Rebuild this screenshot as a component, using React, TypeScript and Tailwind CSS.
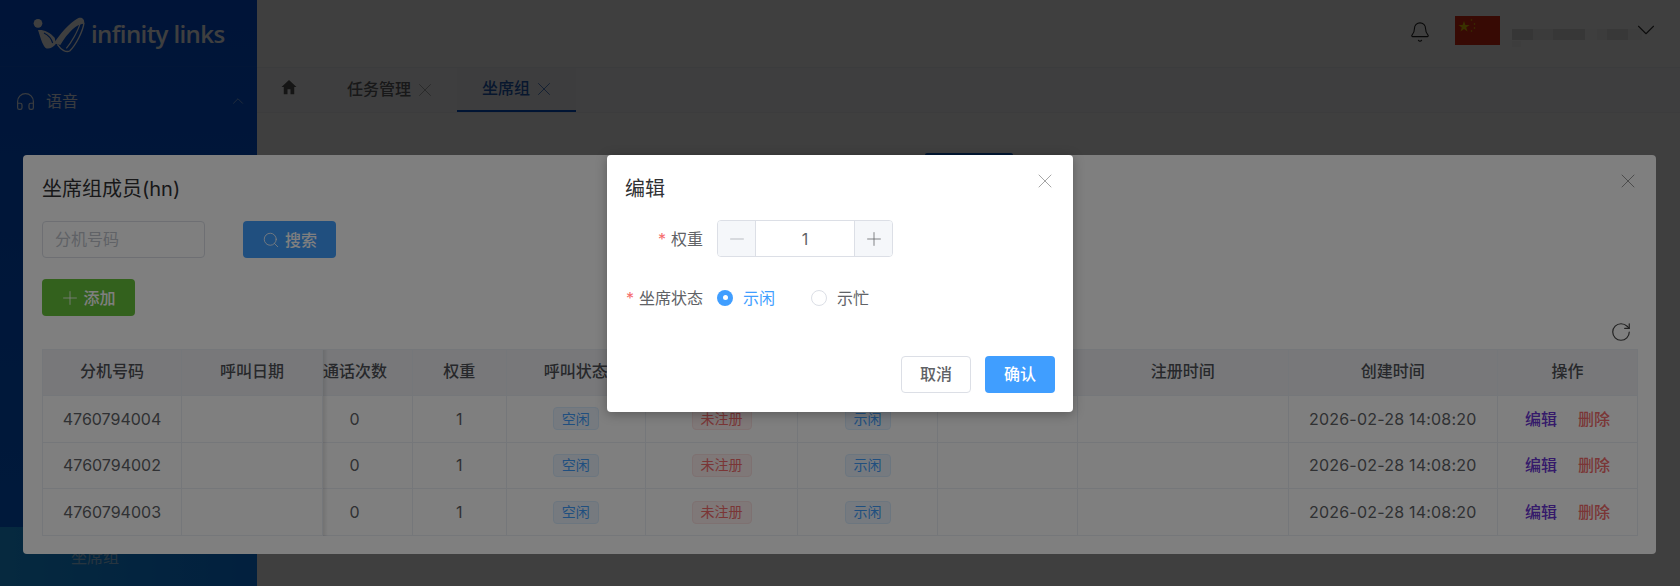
import React from "react";
import { Bell, ChevronDown, ChevronUp, Headphones, Minus, Plus, RotateCw, Search, X } from "lucide-react";

const rows = ["4760794004", "4760794002", "4760794003"];
const cols = "grid-cols-[139px_141px_90px_93.5px_139.5px_152px_140px_140px_210.5px_209.5px_140px]";
const headers = ["分机号码", "呼叫日期", "通话次数", "权重", "呼叫状态", "注册状态", "坐席状态", "", "注册时间", "创建时间", "操作"];

function Cell({ children, className = "" }: { children?: React.ReactNode; className?: string }) {
  return (
    <div className={`flex items-center justify-center border-b border-r border-[#ebeef5] whitespace-nowrap ${className}`}>
      {children}
    </div>
  );
}

function Tag({ kind, children }: { kind: "blue" | "red"; children: React.ReactNode }) {
  const tone =
    kind === "blue"
      ? "bg-[#ecf5ff] border-[#d9ecff] text-[#409eff]"
      : "bg-[#fef0f0] border-[#fde2e2] text-[#f56c6c]";
  return <span className={`flex h-[23px] items-center rounded border px-[8px] text-sm ${tone}`}>{children}</span>;
}

function Logo() {
  return (
    <div className="flex items-center">
      <svg width="64" height="44" viewBox="0 0 192 132" className="ml-[28px] text-white" fill="none">
        <circle cx="30" cy="37" r="13" fill="currentColor" />
        <path d="M30 57 C45 55 65 62 80 80 L84 98 C75 110 60 117 52 110 C42 100 36 75 30 57 Z" fill="currentColor" />
        <path d="M78 97 C95 70 125 35 150 22 C162 17 171 25 168 38 C150 36 120 62 97 102 Z" fill="currentColor" />
        <path d="M168 35 C165 60 145 100 125 120 C115 125 100 118 88 100" stroke="currentColor" strokeWidth="4" />
        <path d="M156 38 C150 60 130 95 115 112" stroke="currentColor" strokeWidth="3.5" />
        <path d="M48 66 C60 72 70 82 74 96" stroke="#0052e0" strokeWidth="3.5" />
      </svg>
      <span className="-ml-[1px] translate-y-[1px] font-['Open_Sans'] text-[24px] font-semibold tracking-[-0.6px] text-white">
        infinity links
      </span>
    </div>
  );
}

function Flag() {
  return (
    <svg width="45" height="29" viewBox="0 0 45 29" className="absolute left-[1455px] top-[16px]">
      <rect width="45" height="29" fill="#de2910" />
      <polygon points="9,5 10.4,9 14.6,9 11.2,11.5 12.5,15.5 9,13 5.5,15.5 6.8,11.5 3.4,9 7.6,9" fill="#e8c800" />
      <circle cx="16.5" cy="4" r="0.8" fill="#e8c800" />
      <circle cx="19.5" cy="8" r="0.8" fill="#e8c800" />
      <circle cx="19.5" cy="12" r="0.8" fill="#e8c800" />
      <circle cx="16.5" cy="15" r="0.8" fill="#e8c800" />
    </svg>
  );
}

function Mosaic() {
  return (
    <div className="absolute left-[1512px] top-[29px]">
      <div className="flex h-[11px] blur-[0.6px]">
        <span className="w-[21px] bg-[#d8d8d8]" />
        <span className="w-[20px] bg-[#ececec]" />
        <span className="w-[32px] bg-[#dedede]" />
        <span className="w-[12px] bg-[#fafafa]" />
        <span className="w-[10px] bg-[#f0f0f0]" />
        <span className="w-[21px] bg-[#e0e0e0]" />
        <span className="w-[14px] bg-[#f6f6f6]" />
      </div>
      <div className="mt-[1px] h-[6px] w-[9px] bg-[#f5f5f5]" />
    </div>
  );
}

export default function App() {
  return (
    <div className="relative flex h-[586px] w-[1680px] overflow-hidden bg-[#fff] font-['Inter','Noto_Sans_CJK_SC',sans-serif] text-base text-[#606266]">
      <aside className="flex w-[257px] shrink-0 flex-col bg-gradient-to-b from-[#0052e2] to-[#0068ee] text-white/90">
        <div className="flex h-[67px] items-center border-b border-[#0a5ae0]">
          <Logo />
        </div>
        <div className="mt-[17px] flex h-[34px] items-center pl-[15px] pr-[10px]">
          <Headphones size={21} strokeWidth={1.4} />
          <span className="ml-[10px]">语音</span>
          <ChevronUp size={18} strokeWidth={1.1} className="ml-auto opacity-70" />
        </div>
        <div className="mt-auto flex h-[59px] items-center bg-gradient-to-r from-[#19a6ff] to-[#0a80fa] pl-[71px] text-white/60">
          坐席组
        </div>
      </aside>

      <main className="flex min-w-0 flex-1 flex-col">
        <header className="flex h-[68px] shrink-0 items-center border-b border-[#eef0f4]">
          <Bell size={22} strokeWidth={1.2} className="absolute left-[1409px] top-[21px] text-[#222]" />
          <Flag />
          <Mosaic />
          <ChevronDown size={30} strokeWidth={0.9} className="absolute left-[1631px] top-[15px] text-[#333]" />
        </header>
        <nav className="flex h-[45px] shrink-0 items-center border-b border-[#f1f2f5] bg-[#fbfbfc] text-[#606266]">
          <svg width="18" height="18" viewBox="0 0 24 24" className="ml-[23px] -translate-y-[3px] text-[#555]" fill="currentColor">
            <path d="M12 2.5 L2 12 H5 V21.5 H10 V15 H14 V21.5 H19 V12 H22 Z" />
          </svg>
          <span className="ml-[49px] -translate-y-[1px] font-medium">任务管理</span>
          <X size={22} strokeWidth={0.8} className="ml-[3px] opacity-70" />
          <div className="ml-[21px] flex h-full w-[119px] items-center border-b-2 border-[#0052cc] bg-[#f5f6f9] pl-[25px] font-medium text-[#1e5dbb]">
            <span className="-translate-y-[1px]">坐席组</span>
            <X size={22} strokeWidth={0.8} className="ml-[3px]" />
          </div>
        </nav>
        <div className="flex-1 bg-white px-[17px] pt-[19px]">
          <div className="flex h-full justify-center rounded bg-white">
            <div className="mt-[21px] h-[2px] w-[88px] rounded-t bg-[#0a5fcf]" />
          </div>
        </div>
      </main>

      <div className="absolute inset-0 bg-black/50" />

      <section className="absolute left-[23px] top-[155px] h-[399px] w-[1633px] rounded bg-white px-[19px]">
        <h2 className="mt-[20px] text-xl leading-[28px] text-[#303133]">坐席组成员(hn)</h2>
        <X size={24} strokeWidth={0.75} className="absolute right-[16px] top-[14px] text-[#777]" />
        <div className="mt-[18px] flex">
          <div className="flex h-[37px] w-[163px] items-center rounded border border-[#dcdfe6] pb-[2px] pl-[12px] text-[#c0c4cc]">分机号码</div>
          <button className="ml-[38px] flex h-[37px] w-[93px] items-center justify-center gap-[5px] rounded bg-[#409eff] font-medium text-white">
            <Search size={18} strokeWidth={1.1} />
            搜索
          </button>
        </div>
        <button className="mt-[21px] flex h-[37px] w-[93px] items-center justify-center gap-[2px] rounded bg-[#67c23a] pr-[2px] font-medium text-white">
          <Plus size={22} strokeWidth={0.9} />
          添加
        </button>
        <div className="flex h-[33px] justify-end pr-[5px] pt-[5px]">
          <RotateCw size={22} strokeWidth={1.3} className="text-[#444]" />
        </div>
        <div className="relative w-[1596px] border-l border-t border-[#ebeef5]">
          <div className={`grid ${cols} h-[46px] bg-[#f0f1f5] font-medium text-[#4f5157]`}>
            {headers.map((h, i) => (
              <Cell key={i} className={i === 2 ? "justify-start pb-[3px]" : "pb-[3px]"}>{h}</Cell>
            ))}
          </div>
          {rows.map((r) => (
            <div key={r} className={`grid ${cols} h-[46.67px]`}>
              <Cell>{r}</Cell>
              <Cell />
              <Cell className="pr-[26px]">0</Cell>
              <Cell>1</Cell>
              <Cell><Tag kind="blue">空闲</Tag></Cell>
              <Cell><Tag kind="red">未注册</Tag></Cell>
              <Cell><Tag kind="blue">示闲</Tag></Cell>
              <Cell />
              <Cell />
              <Cell className="tracking-[0.2px]">2026-02-28 14:08:20</Cell>
              <Cell className="gap-[21px] font-medium">
                <span className="text-[#6a35d4]">编辑</span>
                <span className="text-[#f56c6c]">删除</span>
              </Cell>
            </div>
          ))}
          <div className="absolute bottom-0 left-[280px] top-0 w-[5px] bg-gradient-to-r from-black/10 to-transparent" />
        </div>
      </section>

      <div className="absolute inset-0 bg-black/50" />

      <section className="absolute left-[607px] top-[155px] h-[257px] w-[466px] rounded bg-white pl-[18px] pr-[18px] shadow-[0_2px_12px_rgba(0,0,0,0.3)]">
        <h2 className="mt-[20px] text-xl leading-[28px] text-[#303133]">编辑</h2>
        <X size={24} strokeWidth={0.75} className="absolute right-[16px] top-[14px] text-[#888]" />
        <div className="mt-[17px] flex h-[37px] items-center">
          <label className="w-[78px] text-right"><span className="mr-[5px] text-[#f56c6c]">*</span>权重</label>
          <div className="ml-[14px] flex h-[37px] w-[176px] overflow-hidden rounded border border-[#dcdfe6]">
            <span className="flex w-[38px] items-center justify-center border-r border-[#dcdfe6] bg-[#f5f7fa] text-[#a8abb2]"><Minus size={22} strokeWidth={0.85} /></span>
            <span className="flex flex-1 items-center justify-center">1</span>
            <span className="flex w-[38px] items-center justify-center border-l border-[#dcdfe6] bg-[#f5f7fa]"><Plus size={22} strokeWidth={0.85} /></span>
          </div>
        </div>
        <div className="mt-[22px] flex h-[37px] items-center">
          <label className="w-[78px] text-right"><span className="mr-[5px] text-[#f56c6c]">*</span>坐席状态</label>
          <span className="ml-[14px] flex h-4 w-4 items-center justify-center rounded-full bg-[#409eff]"><span className="h-[5px] w-[5px] rounded-full bg-white" /></span>
          <span className="ml-[10px] text-[#409eff]">示闲</span>
          <span className="ml-[36px] h-4 w-4 rounded-full border border-[#dcdfe6]" />
          <span className="ml-[10px]">示忙</span>
        </div>
        <div className="absolute bottom-[19px] right-[18px] flex gap-[14px] font-medium">
          <button className="h-[37px] w-[70px] rounded border border-[#dcdfe6] bg-white pb-[2px]">取消</button>
          <button className="h-[37px] w-[70px] rounded bg-[#409eff] pb-[2px] text-white">确认</button>
        </div>
      </section>
    </div>
  );
}
